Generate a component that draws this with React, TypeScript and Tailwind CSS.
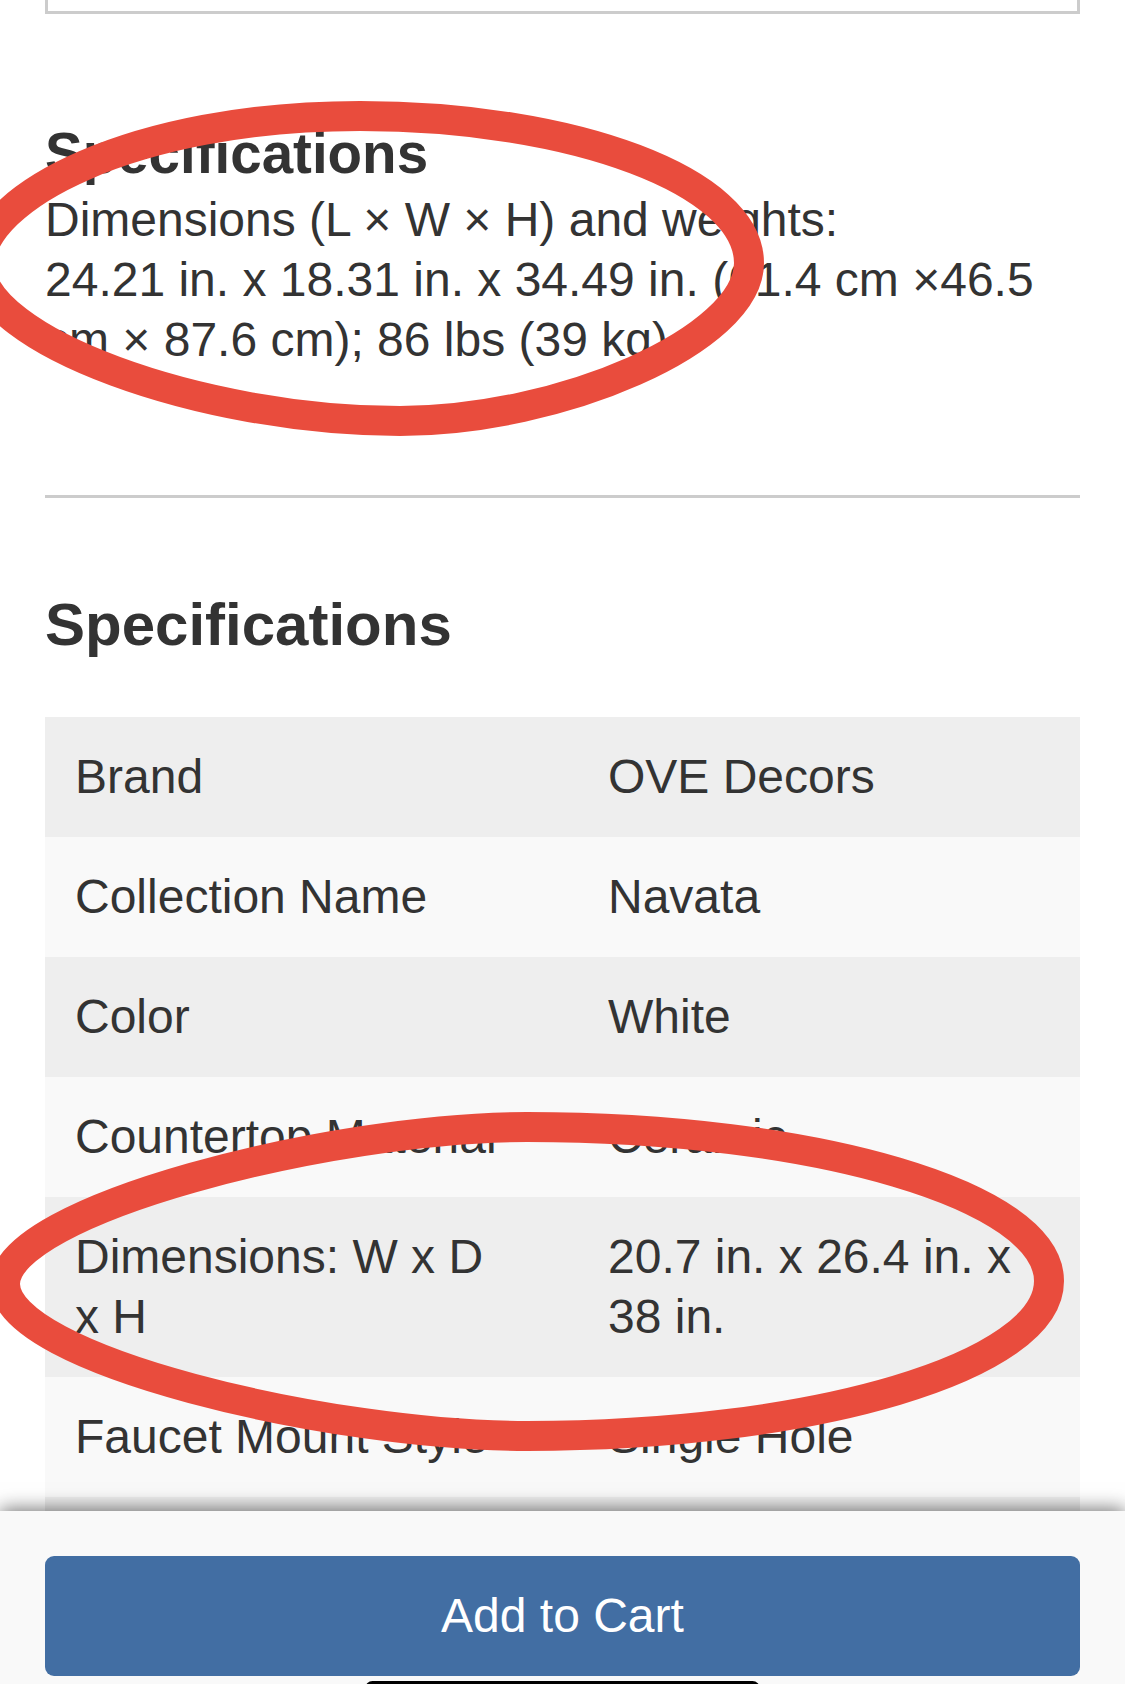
const specs = [
  { label: "Brand", value: "OVE Decors" },
  { label: "Collection Name", value: "Navata" },
  { label: "Color", value: "White" },
  { label: "Countertop Material", value: "Ceramic" },
  { label: "Dimensions: W x D x H", value: "20.7 in. x 26.4 in. x 38 in." },
  { label: "Faucet Mount Style", value: "Single Hole" },
  { label: "Installation Type", value: "Freestanding" },
  { label: "Number of Sinks", value: "1" },
];

// hand-drawn annotation loops, traced from the markup
const loops = [
  "M749 263 C749 182 575 116 360 116 C132 116 -20 198 -20 265 C-20 340 200 421 400 421 C560 421 749 340 749 263 Z",
  "M1049 1281 C1049 1196 816 1127 527 1127 C330 1127 5 1210 5 1284 C5 1360 330 1436 527 1436 C816 1436 1049 1366 1049 1281 Z",
];

export default function App() {
  return (
    <div className="flex h-[1684px] w-[1125px] flex-col overflow-hidden bg-white font-['Liberation_Sans',Arial,Helvetica,sans-serif] text-[#333333]">
      <main className="relative min-h-0 flex-1 overflow-hidden px-[45px]">
        {/* bottom edge of the box above */}
        <div className="h-[14px] border-x-[3px] border-b-[3px] border-[#cccccc]" />

        <h2 className="mt-[107px] text-[56.5px] font-bold leading-[66px]">Specifications</h2>
        <p className="mt-[3px] text-[48px] leading-[60px]">
          Dimensions (L × W × H) and weights:
          <br />
          24.21 in. x 18.31 in. x 34.49 in. (61.4 cm ×46.5 cm × 87.6 cm); 86 lbs (39 kg)
        </p>

        <div className="mt-[125px] h-[3px] bg-[#cccccc]" />

        <h2 className="mt-[94px] text-[60px] font-bold leading-[66px]">Specifications</h2>

        <div className="mt-[59px] grid grid-cols-[533px_1fr] text-[48px] leading-[60px]">
          {specs.map((s, i) => (
            <div key={s.label} className={`col-span-2 grid grid-cols-subgrid ${i % 2 === 0 ? "bg-[#eeeeee]" : "bg-[#f9f9f9]"}`}>
              <div className="py-[30px] pl-[30px] pr-[66px]">{s.label}</div>
              <div className="p-[30px]">{s.value}</div>
            </div>
          ))}
        </div>

        <svg className="pointer-events-none absolute left-0 top-0" width={1125} height={1511} viewBox="0 0 1125 1511">
          {loops.map((d) => (
            <path key={d} d={d} fill="none" stroke="#e94c3d" strokeWidth={30} />
          ))}
        </svg>
      </main>

      <footer className="relative z-10 h-[173px] shrink-0 overflow-hidden bg-[#f9f9f9] px-[45px] pt-[45px] shadow-[0_-2px_18px_rgba(0,0,0,0.55)]">
        <button className="flex h-[120px] w-full items-center justify-center rounded-[9px] bg-[#426ea3] text-[48px] text-white">
          Add to Cart
        </button>
        <div className="mx-auto mt-[5px] h-[15px] w-[395px] rounded-full bg-black" />
      </footer>
    </div>
  );
}
